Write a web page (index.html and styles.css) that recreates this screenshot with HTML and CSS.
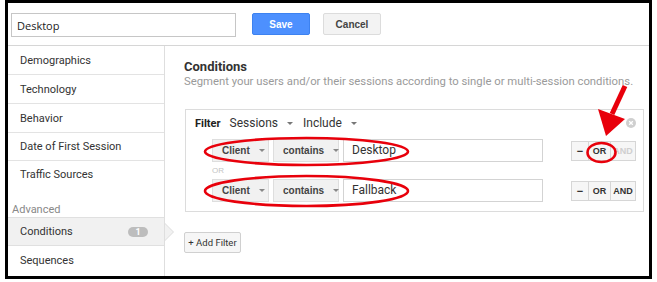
FILE: index.html
```html
<!DOCTYPE html>
<html lang="en">
<head>
    <meta charset="UTF-8">
    <title>Segment Editor - Conditions</title>
    <link rel="stylesheet" href="styles.css">
</head>
<body>
    <div class="frame">
        <!-- Segment name + actions -->
        <div class="topbar">
            <input class="segment-name" type="text" value="Desktop">
            <button class="btn btn-save">Save</button>
            <button class="btn btn-cancel">Cancel</button>
        </div>

        <div class="editor">
            <!-- Left menu -->
            <ul class="side-menu">
                <li class="menu-item">Demographics</li>
                <li class="menu-item">Technology</li>
                <li class="menu-item">Behavior</li>
                <li class="menu-item short">Date of First Session</li>
                <li class="menu-item last">Traffic Sources</li>
                <li class="menu-label">Advanced</li>
                <li class="menu-item active">Conditions <span class="badge">1</span></li>
                <li class="menu-item no-border">Sequences</li>
            </ul>

            <!-- Conditions panel -->
            <div class="panel">
                <h2 class="panel-title">Conditions</h2>
                <p class="panel-desc">Segment your users and/or their sessions according to single or multi-session conditions.</p>

                <div class="filter-box">
                    <span class="close-icon">
                        <svg width="10" height="10" viewBox="0 0 10 10">
                            <circle cx="5" cy="5" r="5" fill="#cfcfcf"/>
                            <path d="M3.2 3.2 L6.8 6.8 M6.8 3.2 L3.2 6.8" stroke="#fff" stroke-width="1.3"/>
                        </svg>
                    </span>
                    <div class="filter-head">
                        <span class="filter-label">Filter</span>
                        <span class="plain-select">Sessions <span class="caret"></span></span>
                        <span class="plain-select">Include <span class="caret"></span></span>
                    </div>

                    <div class="cond-row">
                        <span class="select sel-dim">Client <span class="caret"></span></span>
                        <span class="select sel-op">contains <span class="caret"></span></span>
                        <span class="value">Desktop</span>
                        <span class="btn-group">
                            <span class="gbtn g-minus">&minus;</span><span class="gbtn g-or">OR</span><span class="gbtn g-and disabled">AND</span>
                        </span>
                    </div>
                    <div class="or-label">OR</div>
                    <div class="cond-row">
                        <span class="select sel-dim">Client <span class="caret"></span></span>
                        <span class="select sel-op">contains <span class="caret"></span></span>
                        <span class="value">Fallback</span>
                        <span class="btn-group">
                            <span class="gbtn g-minus">&minus;</span><span class="gbtn g-or">OR</span><span class="gbtn g-and">AND</span>
                        </span>
                    </div>
                </div>

                <button class="btn-add">+ Add Filter</button>
            </div>
        </div>
    </div>

    <!-- Red annotation marks drawn over the screenshot -->
    <svg class="marks" width="657" height="282" viewBox="0 0 657 282">
        <ellipse cx="306.5" cy="151.5" rx="101.5" ry="13.5" fill="none" stroke="#e8000b" stroke-width="2.6"/>
        <ellipse cx="306.5" cy="191" rx="101.5" ry="15" fill="none" stroke="#e8000b" stroke-width="2.6"/>
        <ellipse cx="601.5" cy="152.5" rx="14" ry="9.5" fill="none" stroke="#e8000b" stroke-width="2.6"/>
        <line x1="625" y1="86" x2="612" y2="114" stroke="#e8000b" stroke-width="5"/>
        <polygon points="598,109 625,119 606,136" fill="#e8000b"/>
    </svg>
</body>
</html>
```

FILE: styles.css
```css
/* Basic Reset */
* {
    box-sizing: border-box;
    margin: 0;
    padding: 0;
}

body {
    font-family: Roboto, "Liberation Sans", Arial, sans-serif;
    background: #fff;
    color: #333;
    position: relative;
    width: 657px;
    height: 282px;
    overflow: hidden;
}

/* Black screenshot frame */
.frame {
    margin-left: 5px;
    width: 647px;
    height: 279px;
    border: 3px solid #000;
    display: flex;
    flex-direction: column;
    overflow: hidden;
}

/* Top bar */
.topbar {
    flex-shrink: 0;
    display: flex;
    align-items: flex-start;
    height: 43px;
    padding: 10px 0 0 3px;
    border-bottom: 1px solid #d6d6d6;
}

.segment-name {
    width: 225px;
    height: 24px;
    border: 1px solid #c6c6c6;
    padding: 0 5px;
    font-family: "Open Sans", Roboto, sans-serif;
    font-size: 11px;
    color: #222;
    outline: none;
}

.btn {
    height: 22px;
    width: 58px;
    border-radius: 2px;
    font-family: "Liberation Sans", Arial, sans-serif;
    font-size: 10px;
    font-weight: bold;
}

.btn-save {
    margin-left: 16px;
    background: #4d90fe;
    border: 1px solid #3d82f0;
    color: #fff;
}

.btn-cancel {
    margin-left: 13px;
    background: #f3f3f3;
    border: 1px solid #dcdcdc;
    color: #444;
}

/* Editor layout */
.editor {
    flex: 1;
    min-height: 0;
    display: flex;
}

.side-menu {
    list-style: none;
    width: 157px;
    border-right: 1px solid #dedede;
    font-size: 11px;
}

.menu-item {
    position: relative;
    height: 29px;
    line-height: 29px;
    padding-left: 12px;
    border-bottom: 1px solid #e3e3e3;
}

.menu-item.short {
    height: 28px;
    line-height: 28px;
}

.menu-item.last {
    height: 27px;
    line-height: 27px;
    border-bottom: none;
}

.menu-item.no-border {
    border-bottom: none;
}

.menu-label {
    margin-top: 15px;
    height: 14px;
    line-height: 14px;
    padding-left: 4px;
    color: #888;
    font-size: 11px;
}

.menu-item.active {
    height: 29px;
    background: #f1f1f1;
    border-top: 1px solid #e0e0e0;
    border-bottom: 1px solid #e0e0e0;
    line-height: 27px;
}

/* little pointer from the active item into the panel */
.menu-item.active::after {
    content: "";
    position: absolute;
    right: -9px;
    top: 6px;
    width: 0;
    height: 0;
    border-top: 8px solid transparent;
    border-bottom: 8px solid transparent;
    border-left: 8px solid #f1f1f1;
}

.menu-item.active::before {
    content: "";
    position: absolute;
    right: -10px;
    top: 5px;
    width: 0;
    height: 0;
    border-top: 9px solid transparent;
    border-bottom: 9px solid transparent;
    border-left: 9px solid #dcdcdc;
}

.badge {
    position: absolute;
    left: 120px;
    top: 9px;
    width: 20px;
    height: 10px;
    border-radius: 5px;
    background: #bdbdbd;
    color: #fff;
    font-size: 9px;
    font-weight: bold;
    line-height: 10px;
    text-align: center;
}

/* Right panel */
.panel {
    flex: 1;
    padding: 12px 0 0 19px;
}

.panel-title {
    font-size: 13px;
    font-weight: bold;
    line-height: 17px;
    color: #333;
}

.panel-desc {
    font-size: 11.3px;
    line-height: 14px;
    color: #9a9a9a;
}

.filter-box {
    position: relative;
    width: 459px;
    margin: 20px 0 0 1px;
    border: 1px solid #dcdcdc;
    padding: 0 0 9px 0;
}

.close-icon {
    position: absolute;
    right: 7px;
    top: 8px;
    width: 10px;
    height: 10px;
}

.close-icon svg {
    display: block;
}

.filter-head {
    display: flex;
    align-items: center;
    height: 29px;
    padding: 0 0 3px 9px;
    font-size: 12px;
}

.filter-label {
    font-weight: bold;
    font-size: 11px;
    margin-right: 9px;
    color: #222;
}

.plain-select {
    display: flex;
    align-items: center;
    margin-right: 10px;
    color: #333;
}

.caret {
    display: inline-block;
    width: 0;
    height: 0;
    margin-left: 9px;
    border-left: 3px solid transparent;
    border-right: 3px solid transparent;
    border-top: 3px solid #777;
}

.cond-row {
    display: flex;
    align-items: center;
    height: 23px;
    padding-left: 26px;
}

.select {
    display: flex;
    align-items: center;
    justify-content: space-between;
    height: 23px;
    padding: 0 8px 0 9px;
    margin-right: 4px;
    background: #f1f1f1;
    border: 1px solid #dedede;
    font-family: "Liberation Sans", Arial, sans-serif;
    font-size: 10px;
    font-weight: bold;
    color: #444;
}

.select .caret {
    border-top-color: #888;
}

.sel-dim {
    width: 57px;
}

.sel-op {
    width: 66px;
}

.value {
    width: 200px;
    height: 23px;
    line-height: 21px;
    border: 1px solid #d3d3d3;
    padding-left: 8px;
    font-size: 12px;
    color: #333;
}

.btn-group {
    display: flex;
    margin-left: 28px;
    height: 20px;
}

.gbtn {
    height: 20px;
    line-height: 18px;
    border: 1px solid #d6d6d6;
    background: #f6f6f6;
    text-align: center;
    font-family: "Liberation Sans", Arial, sans-serif;
    font-size: 9px;
    font-weight: bold;
    color: #333;
}

.gbtn + .gbtn {
    border-left: none;
}

.g-minus {
    width: 18px;
    font-size: 11px;
}

.g-or {
    width: 22px;
}

.g-and {
    width: 25px;
}

.gbtn.disabled {
    color: #cfcfcf;
}

.or-label {
    height: 17px;
    line-height: 17px;
    padding-left: 26px;
    font-family: "Liberation Sans", Arial, sans-serif;
    font-size: 8px;
    color: #c4c4c4;
}

.btn-add {
    margin-top: 20px;
    width: 57px;
    height: 21px;
    background: #f6f6f6;
    border: 1px solid #d0d0d0;
    border-radius: 2px;
    font-family: Roboto, sans-serif;
    font-size: 9.5px;
    color: #333;
}

/* Annotation overlay */
.marks {
    position: absolute;
    left: 0;
    top: 0;
    pointer-events: none;
}
```
